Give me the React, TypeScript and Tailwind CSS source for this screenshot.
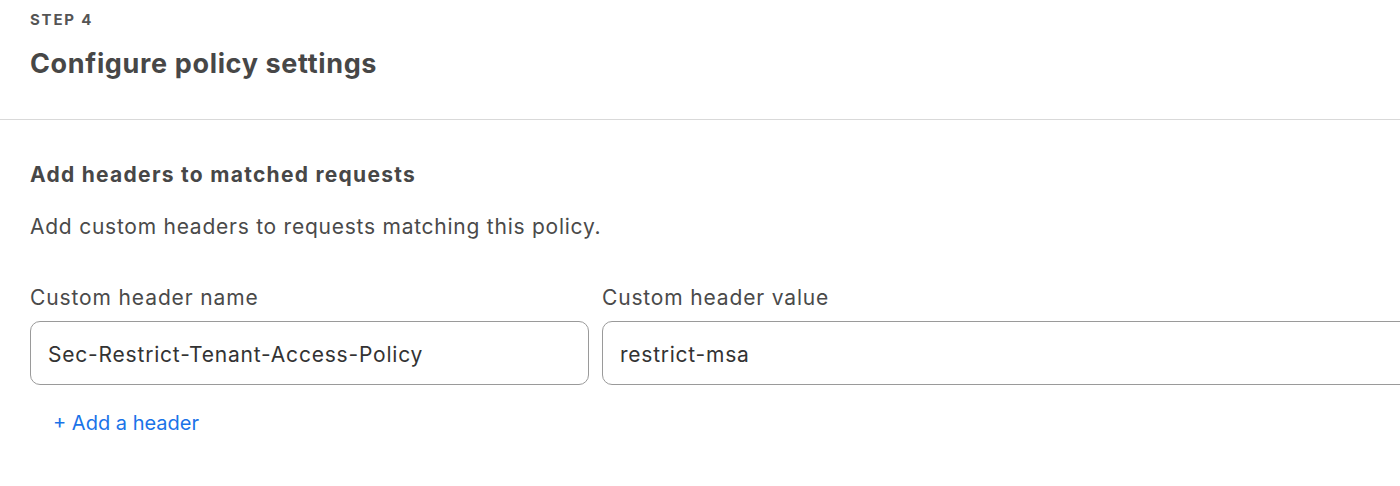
import React from "react";

export default function App() {
  return (
    <div
      className="w-[1400px] h-[486px] overflow-hidden bg-white text-[#474747]"
      style={{ fontFamily: "Inter, 'Noto Sans', sans-serif" }}
    >
      <div className="px-[30px] pt-[10px] h-[120px] border-b border-[#d9d9d9]">
        <div className="text-[15px] font-bold tracking-[0.12em] leading-[20px] text-[#555]">STEP 4</div>
        <h1 className="mt-[18px] text-[27px] font-bold leading-[32px] text-[#474747] tracking-[0.024em]">
          Configure policy settings
        </h1>
      </div>
      <div className="px-[30px] pt-[42px]">
        <h2 className="text-[21px] font-bold leading-[26px] text-[#474747] tracking-[0.061em]">
          Add headers to matched requests
        </h2>
        <p className="mt-[26px] text-[21px] leading-[26px] text-[#4a4a4a] tracking-[0.036em]">
          Add custom headers to requests matching this policy.
        </p>
        <div className="mt-[45px] flex gap-[13px]">
          <div className="w-[559px] shrink-0 flex flex-col">
            <label className="text-[21px] leading-[26px] text-[#4a4a4a] tracking-[0.042em]">Custom header name</label>
            <div className="mt-[10px] h-[64px] rounded-[10px] border border-[#9a9a9a] flex items-center px-[17px] pt-[3px] text-[21px] text-[#333] tracking-[0.038em]">
              Sec-Restrict-Tenant-Access-Policy
            </div>
          </div>
          <div className="w-[900px] shrink-0 flex flex-col">
            <label className="text-[21px] leading-[26px] text-[#4a4a4a] tracking-[0.04em]">Custom header value</label>
            <div className="mt-[10px] h-[64px] rounded-[10px] border border-[#9a9a9a] flex items-center px-[17px] pt-[3px] text-[21px] text-[#333] tracking-[0.036em]">
              restrict-msa
            </div>
          </div>
        </div>
        <button className="mt-[25px] ml-[23px] text-[20px] leading-[26px] text-[#1a73e8]">+ Add a header</button>
      </div>
    </div>
  );
}
